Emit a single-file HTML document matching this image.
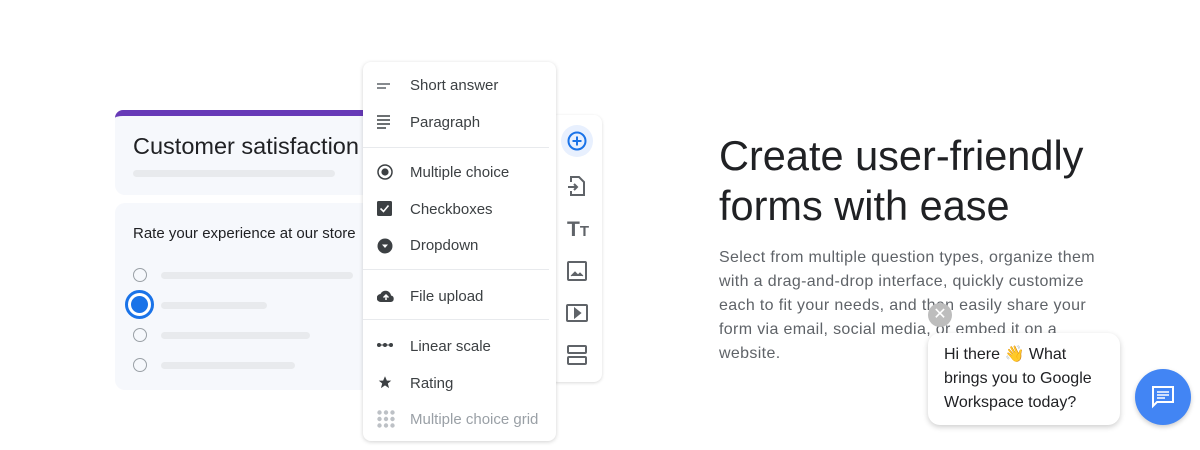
<!DOCTYPE html>
<html><head><meta charset="utf-8"><style>
body{margin:0;width:1200px;height:450px;background:#fff;font-family:"Liberation Sans",sans-serif;position:relative;overflow:hidden}
.a{position:absolute}
.card{background:#f6f8fc;border-radius:10px}
.bar{background:#e8eaed;height:7px;border-radius:4px;position:absolute}
.rad{position:absolute;width:12px;height:12px;border:1.5px solid #9aa0a6;border-radius:50%}
.menu{left:363px;top:62px;width:193px;height:379px;background:#fff;border-radius:8px;box-shadow:0 1px 4px rgba(0,0,0,.18)}
.it{position:absolute;left:47px;font-size:15px;color:#3c4043}
.ic{position:absolute;left:14px}
.hr{position:absolute;left:0;width:186px;height:1px;background:#e8eaed}
</style></head><body>
<div class="a card" style="left:115px;top:110px;width:260px;height:85px;border-top:6px solid #673ab7;box-sizing:border-box;border-radius:8px 8px 10px 10px"></div>
<div class="a" style="left:133px;top:133px;font-size:23.5px;color:#202124">Customer satisfaction</div>
<div class="bar" style="left:133px;top:170px;width:202px"></div>
<div class="a card" style="left:115px;top:203px;width:260px;height:187px"></div>
<div class="a" style="left:133px;top:225px;font-size:15px;color:#202124">Rate your experience at our store</div>
<div class="rad" style="left:133px;top:268px"></div><div class="bar" style="left:161px;top:272px;width:192px"></div>
<div class="a" style="left:125px;top:290px;width:29px;height:29px;border:3px solid #1a73e8;border-radius:50%;box-sizing:border-box;background:#fff"><div style="margin:3px;width:17px;height:17px;border-radius:50%;background:#1a73e8"></div></div>
<div class="bar" style="left:161px;top:302px;width:106px"></div>
<div class="rad" style="left:133px;top:328px"></div><div class="bar" style="left:161px;top:332px;width:149px"></div>
<div class="rad" style="left:133px;top:358px"></div><div class="bar" style="left:161px;top:362px;width:134px"></div>

<div class="a" style="left:550px;top:115px;width:52px;height:267px;background:#fff;border-radius:8px;box-shadow:0 1px 3px rgba(0,0,0,.15)"></div>
<div class="a" style="left:561px;top:125px;width:32px;height:32px;border-radius:50%;background:#e8f0fe"></div>
<svg class="a" style="left:567px;top:131px" width="20" height="20" viewBox="0 0 20 20"><circle cx="10" cy="10" r="8.5" fill="none" stroke="#1a73e8" stroke-width="2"/><path d="M10 5.5v9M5.5 10h9" stroke="#1a73e8" stroke-width="2"/></svg>
<svg class="a" style="left:567px;top:175px" width="20" height="22" viewBox="0 0 20 22" fill="none" stroke="#5f6368" stroke-width="2"><path d="M4 7V2h8l5 5v13H4v-4"/><path d="M1 12h9M7 9l3 3-3 3"/></svg>
<div class="a" style="left:567px;top:218px;font-size:21px;font-weight:bold;color:#5f6368">T<span style="font-size:15px">T</span></div>
<svg class="a" style="left:567px;top:261px" width="20" height="20" viewBox="0 0 20 20" fill="none" stroke="#5f6368" stroke-width="2"><rect x="1" y="1" width="18" height="18" rx="1"/><path d="M4 15l4-4 3 3 2-2 3 3" fill="#5f6368" stroke-width="1"/></svg>
<svg class="a" style="left:566px;top:304px" width="22" height="18" viewBox="0 0 22 18" fill="none" stroke="#5f6368" stroke-width="2"><rect x="1" y="1" width="20" height="16" rx="1"/><path d="M9 5l5 4-5 4z" fill="#5f6368"/></svg>
<svg class="a" style="left:567px;top:345px" width="20" height="20" viewBox="0 0 20 20" fill="none" stroke="#5f6368" stroke-width="2"><rect x="1" y="1" width="18" height="7" rx="1"/><rect x="1" y="12" width="18" height="7" rx="1"/></svg>

<div class="a menu">
<svg class="ic" style="top:20px" width="16" height="8"><path d="M0 2h13M0 6h9" stroke="#5f6368" stroke-width="1.5"/></svg><div class="it" style="top:15px">Short answer</div>
<svg class="ic" style="top:53px" width="16" height="14"><path d="M0 1h13M0 5h13M0 9h13M0 13h9" stroke="#3c4043" stroke-width="1.6"/></svg><div class="it" style="top:52px">Paragraph</div>
<div class="hr" style="top:85px"></div>
<svg class="ic" style="top:102px" width="16" height="16"><circle cx="8" cy="8" r="7" fill="none" stroke="#3c4043" stroke-width="1.5"/><circle cx="8" cy="8" r="3.6" fill="#3c4043"/></svg><div class="it" style="top:102px">Multiple choice</div>
<svg class="ic" style="top:139px" width="16" height="16"><rect width="15" height="15" rx="1.5" fill="#3c4043"/><path d="M3.5 7.5l3 3 5-6" stroke="#fff" stroke-width="1.6" fill="none"/></svg><div class="it" style="top:139px">Checkboxes</div>
<svg class="ic" style="top:176px" width="16" height="16"><circle cx="8" cy="8" r="7.5" fill="#3c4043"/><path d="M5 6.5h6L8 10z" fill="#fff"/></svg><div class="it" style="top:175px">Dropdown</div>
<div class="hr" style="top:207px"></div>
<svg class="ic" style="top:227px" width="18" height="14"><path d="M4 13a4 4 0 0 1-.5-8 5.5 5.5 0 0 1 10.5 1.5A3.3 3.3 0 0 1 14 13z" fill="#3c4043"/><path d="M9 11V6M6.5 8.5L9 6l2.5 2.5" stroke="#fff" stroke-width="1.5" fill="none"/></svg><div class="it" style="top:226px">File upload</div>
<div class="hr" style="top:257px"></div>
<svg class="ic" style="top:280px" width="16" height="6"><circle cx="2" cy="3" r="2" fill="#3c4043"/><circle cx="8" cy="3" r="2" fill="#3c4043"/><circle cx="14" cy="3" r="2" fill="#3c4043"/><path d="M2 3h12" stroke="#3c4043"/></svg><div class="it" style="top:276px">Linear scale</div>
<svg class="ic" style="top:313px" width="16" height="15" viewBox="0 0 24 24"><path d="M12 2l3 7h7l-5.5 4.5 2 7.5L12 16.5 5.5 21l2-7.5L2 9h7z" fill="#3c4043"/></svg><div class="it" style="top:313px">Rating</div>
<svg class="ic" style="top:348px" width="18" height="18"><g fill="#bdc1c6"><circle cx="2.5" cy="2.5" r="2.2"/><circle cx="9" cy="2.5" r="2.2"/><circle cx="15.5" cy="2.5" r="2.2"/><circle cx="2.5" cy="9" r="2.2"/><circle cx="9" cy="9" r="2.2"/><circle cx="15.5" cy="9" r="2.2"/><circle cx="2.5" cy="15.5" r="2.2"/><circle cx="9" cy="15.5" r="2.2"/><circle cx="15.5" cy="15.5" r="2.2"/></g></svg><div class="it" style="top:349px;color:#9aa0a6">Multiple choice grid</div>
</div>

<div class="a" style="left:719px;top:131px;font-size:41.5px;line-height:50px;color:#202124">Create user-friendly<br>forms with ease</div>
<div class="a" style="left:719px;top:246px;width:390px;font-size:16px;line-height:24px;color:#5f6368;letter-spacing:.35px">Select from multiple question types, organize them with a drag-and-drop interface, quickly customize each to fit your needs, and then easily share your form via email, social media, or embed it on a website.</div>

<div class="a" style="left:928px;top:333px;width:192px;height:92px;background:#fff;border-radius:12px;box-shadow:0 2px 6px rgba(0,0,0,.2)"></div>
<div class="a" style="left:944px;top:343px;font-size:16px;line-height:24px;color:#202124">Hi there 👋 What<br>brings you to Google<br>Workspace today?</div>
<div class="a" style="left:928px;top:303px;width:24px;height:24px;border-radius:50%;background:#bdbdbd;color:#fff;font-size:16px;text-align:center;line-height:24px">✕</div>
<div class="a" style="left:1135px;top:369px;width:56px;height:56px;border-radius:50%;background:#4285f4;box-shadow:0 2px 5px rgba(0,0,0,.2)"></div>
<svg class="a" style="left:1151px;top:385px" width="24" height="24" viewBox="0 0 24 24"><path d="M2 2h20v15H6l-4 4z" fill="none" stroke="#fff" stroke-width="2"/><path d="M6 7h12M6 10h12M6 13h8" stroke="#fff" stroke-width="1.6"/></svg>
</body></html>
